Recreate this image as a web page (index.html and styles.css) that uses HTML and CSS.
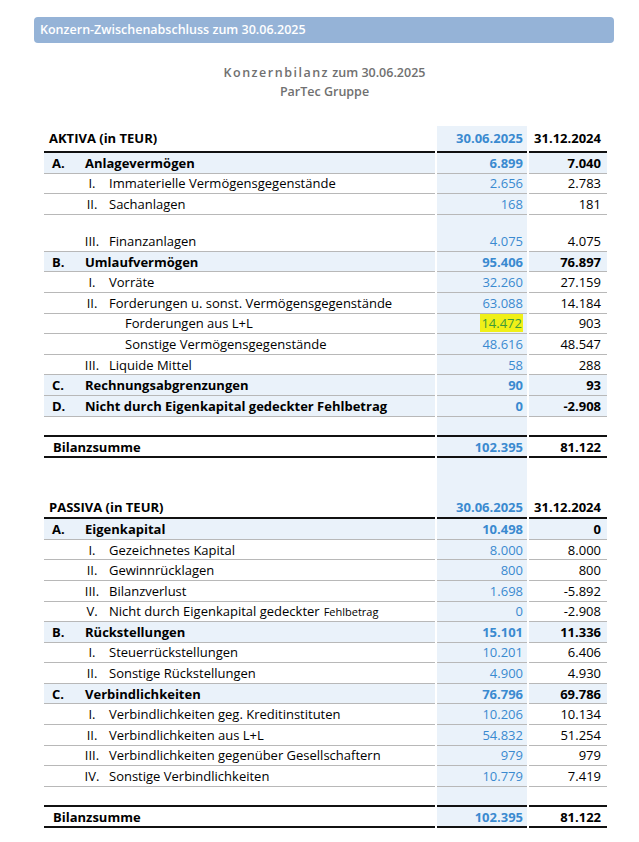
FILE: index.html
```html
<!DOCTYPE html>
<html lang="de">
<head>
<meta charset="utf-8">
<title>Konzernbilanz</title>
<link rel="stylesheet" href="styles.css">
</head>
<body>
<div class="page">
  <div class="banner">Konzern-Zwischenabschluss zum 30.06.2025</div>
  <div class="title">
    <div class="t1"><span class="spaced">Konzernbilanz</span> zum 30.06.2025</div>
    <div class="t2">ParTec Gruppe</div>
  </div>

  <div class="sheet">
    <div class="row head">
      <div class="c lbl"><span class="htxt">AKTIVA (in TEUR)</span></div>
      <div class="c n1">30.06.2025</div>
      <div class="c n2">31.12.2024</div>
    </div>
    <div class="row cat">
      <div class="c lbl"><span class="mk">A.</span>Anlagevermögen</div>
      <div class="c n1">6.899</div>
      <div class="c n2">7.040</div>
    </div>
    <div class="row">
      <div class="c lbl"><span class="rn">I.</span>Immaterielle Vermögensgegenstände</div>
      <div class="c n1">2.656</div>
      <div class="c n2">2.783</div>
    </div>
    <div class="row">
      <div class="c lbl"><span class="rn">II.</span>Sachanlagen</div>
      <div class="c n1">168</div>
      <div class="c n2">181</div>
    </div>
    <div class="row tall">
      <div class="c lbl"><span class="rn">III.</span>Finanzanlagen</div>
      <div class="c n1">4.075</div>
      <div class="c n2">4.075</div>
    </div>
    <div class="row cat">
      <div class="c lbl"><span class="mk">B.</span>Umlaufvermögen</div>
      <div class="c n1">95.406</div>
      <div class="c n2">76.897</div>
    </div>
    <div class="row">
      <div class="c lbl"><span class="rn">I.</span>Vorräte</div>
      <div class="c n1">32.260</div>
      <div class="c n2">27.159</div>
    </div>
    <div class="row">
      <div class="c lbl"><span class="rn">II.</span>Forderungen u. sonst. Vermögensgegenstände</div>
      <div class="c n1">63.088</div>
      <div class="c n2">14.184</div>
    </div>
    <div class="row">
      <div class="c lbl sub">Forderungen aus L+L</div>
      <div class="c n1"><span class="hl">14.472</span></div>
      <div class="c n2">903</div>
    </div>
    <div class="row">
      <div class="c lbl sub">Sonstige Vermögensgegenstände</div>
      <div class="c n1">48.616</div>
      <div class="c n2">48.547</div>
    </div>
    <div class="row">
      <div class="c lbl"><span class="rn">III.</span>Liquide Mittel</div>
      <div class="c n1">58</div>
      <div class="c n2">288</div>
    </div>
    <div class="row cat">
      <div class="c lbl"><span class="mk">C.</span>Rechnungsabgrenzungen</div>
      <div class="c n1">90</div>
      <div class="c n2">93</div>
    </div>
    <div class="row cat">
      <div class="c lbl"><span class="mk">D.</span>Nicht durch Eigenkapital gedeckter Fehlbetrag</div>
      <div class="c n1">0</div>
      <div class="c n2">-2.908</div>
    </div>
    <div class="row blank">
      <div class="c lbl"></div>
      <div class="c n1"></div>
      <div class="c n2"></div>
    </div>
    <div class="row sum">
      <div class="c lbl"><span class="stxt">Bilanzsumme</span></div>
      <div class="c n1">102.395</div>
      <div class="c n2">81.122</div>
    </div>
    <div class="row spacer">
      <div class="c lbl"></div>
      <div class="c n1"></div>
      <div class="c n2"></div>
    </div>

    <div class="row head head2">
      <div class="c lbl"><span class="htxt">PASSIVA (in TEUR)</span></div>
      <div class="c n1">30.06.2025</div>
      <div class="c n2">31.12.2024</div>
    </div>
    <div class="row cat">
      <div class="c lbl"><span class="mk">A.</span>Eigenkapital</div>
      <div class="c n1">10.498</div>
      <div class="c n2">0</div>
    </div>
    <div class="row">
      <div class="c lbl"><span class="rn">I.</span>Gezeichnetes Kapital</div>
      <div class="c n1">8.000</div>
      <div class="c n2">8.000</div>
    </div>
    <div class="row">
      <div class="c lbl"><span class="rn">II.</span>Gewinnrücklagen</div>
      <div class="c n1">800</div>
      <div class="c n2">800</div>
    </div>
    <div class="row">
      <div class="c lbl"><span class="rn">III.</span>Bilanzverlust</div>
      <div class="c n1">1.698</div>
      <div class="c n2">-5.892</div>
    </div>
    <div class="row">
      <div class="c lbl"><span class="rn">V.</span>Nicht durch Eigenkapital gedeckter <span class="small">Fehlbetrag</span></div>
      <div class="c n1">0</div>
      <div class="c n2">-2.908</div>
    </div>
    <div class="row cat">
      <div class="c lbl"><span class="mk">B.</span>Rückstellungen</div>
      <div class="c n1">15.101</div>
      <div class="c n2">11.336</div>
    </div>
    <div class="row">
      <div class="c lbl"><span class="rn">I.</span>Steuerrückstellungen</div>
      <div class="c n1">10.201</div>
      <div class="c n2">6.406</div>
    </div>
    <div class="row">
      <div class="c lbl"><span class="rn">II.</span>Sonstige Rückstellungen</div>
      <div class="c n1">4.900</div>
      <div class="c n2">4.930</div>
    </div>
    <div class="row cat">
      <div class="c lbl"><span class="mk">C.</span>Verbindlichkeiten</div>
      <div class="c n1">76.796</div>
      <div class="c n2">69.786</div>
    </div>
    <div class="row">
      <div class="c lbl"><span class="rn">I.</span>Verbindlichkeiten geg. Kreditinstituten</div>
      <div class="c n1">10.206</div>
      <div class="c n2">10.134</div>
    </div>
    <div class="row">
      <div class="c lbl"><span class="rn">II.</span>Verbindlichkeiten aus L+L</div>
      <div class="c n1">54.832</div>
      <div class="c n2">51.254</div>
    </div>
    <div class="row">
      <div class="c lbl"><span class="rn">III.</span>Verbindlichkeiten gegenüber Gesellschaftern</div>
      <div class="c n1">979</div>
      <div class="c n2">979</div>
    </div>
    <div class="row">
      <div class="c lbl"><span class="rn">IV.</span>Sonstige Verbindlichkeiten</div>
      <div class="c n1">10.779</div>
      <div class="c n2">7.419</div>
    </div>
    <div class="row blank">
      <div class="c lbl"></div>
      <div class="c n1"></div>
      <div class="c n2"></div>
    </div>
    <div class="row sum">
      <div class="c lbl"><span class="stxt">Bilanzsumme</span></div>
      <div class="c n1">102.395</div>
      <div class="c n2">81.122</div>
    </div>
  </div>
</div>
</body>
</html>
```

FILE: styles.css
```css
* { box-sizing: border-box; }
html, body { margin: 0; padding: 0; background: #fff; }
body {
  font-family: "Open Sans", Lato, "Liberation Sans", sans-serif;
  font-size: 13px;
  color: #000;
}
.page { padding-top: 17px; }
.banner {
  margin-left: 34px;
  width: 580px;
  height: 26px;
  background: #95b3d7;
  border-radius: 4px;
  color: #fff;
  font-weight: 600;
  font-size: 12.5px;
  line-height: 26px;
  padding-left: 6px;
}
.title {
  margin-top: 20px;
  text-align: center;
  color: #707070;
  font-weight: 600;
  font-size: 12.5px;
  line-height: 19px;
  padding-left: 10px;
}
.spaced { letter-spacing: 1.5px; }
.sheet {
  margin-top: 25px;
  margin-left: 44px;
  width: 563px;
}
.row {
  display: grid;
  grid-template-columns: 391px 90px 78px;
  column-gap: 2px;
  height: 20.6px;
}
.c {
  border-bottom: 1px solid #b8b8b8;
  display: flex;
  align-items: center;
  white-space: nowrap;
}
.lbl { padding-left: 8px; }
.n1 {
  background: #eaf2fa;
  color: #3a8ad0;
  justify-content: flex-end;
  padding-right: 4px;
}
.n2 {
  justify-content: flex-end;
  padding-right: 6px;
}
.cat .lbl, .cat .n2 { background: #eaf2fa; }
.cat .c { font-weight: 700; }
.mk { display: inline-block; width: 33px; }
.rn {
  display: inline-block;
  width: 24px;
  margin-left: 28px;
  margin-right: 5px;
  text-align: center;
}
.sub { padding-left: 81px; }
.tall { height: 37px; }
.tall .c { align-items: flex-end; padding-bottom: 1px; }
.head { height: 27px; }
.head .c {
  border-bottom: 2px solid #111;
  font-weight: 700;
  align-items: flex-end;
  padding-bottom: 4px;
}
.head2 .c { padding-bottom: 1px; }
.head .lbl { padding-left: 5px; }
.blank .c { border-bottom: 2px solid #111; }
.sum { height: 21px; }
.sum .c {
  border-bottom: 2px solid #111;
  font-weight: 700;
}
.sum .lbl { padding-left: 9px; }
.spacer { height: 34px; }
.spacer .c { border-bottom: none; }
.small { font-size: 11px; margin-left: 4px; }
.hl {
  background: #f0f018;
  color: #3f9a3a;
  padding: 0 1px;
}
```
